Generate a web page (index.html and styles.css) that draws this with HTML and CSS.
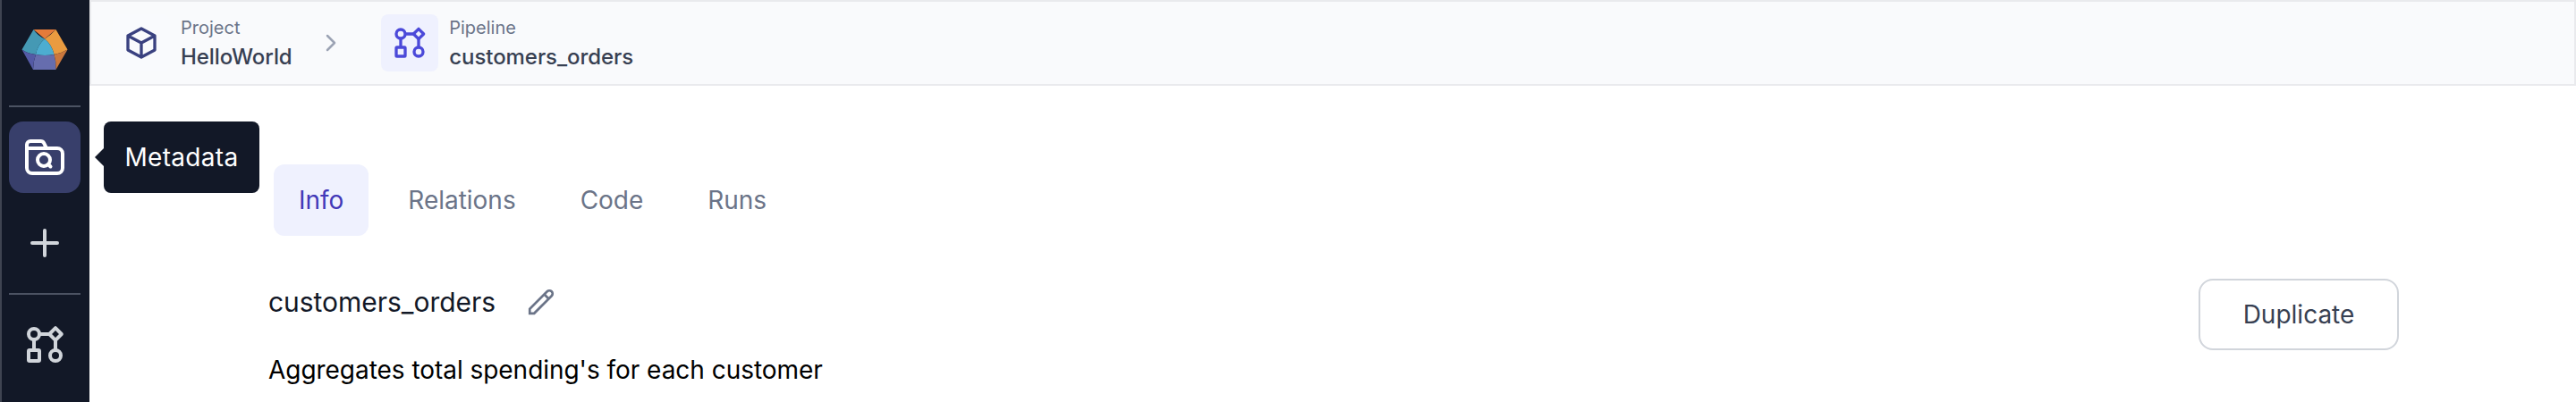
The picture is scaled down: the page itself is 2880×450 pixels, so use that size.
FILE: index.html
```html
<!DOCTYPE html>
<html lang="en">
<head>
<meta charset="utf-8">
<title>customers_orders</title>
<link rel="stylesheet" href="styles.css">
</head>
<body>
<svg width="0" height="0" class="sprite" aria-hidden="true">
  <symbol id="pipeline" viewBox="0 0 24 24">
    <g fill="none" stroke="currentColor" stroke-width="2" stroke-linejoin="round">
      <circle cx="6" cy="6" r="3"/>
      <path d="M18 2.6 21.4 6 18 9.4 14.6 6z"/>
      <rect x="3" y="15" width="6" height="6" rx=".5"/>
      <circle cx="18" cy="18" r="3"/>
      <path d="M9 6h5.6M6 9v6M18 9.4V15"/>
    </g>
  </symbol>
</svg>
<div class="app">
  <nav class="sidebar">
    <svg class="logo" viewBox="0 0 52 46">
      <path fill="#e57b3a" d="M13.5 0h25L26 10.500z"/>
      <path fill="#e99b40" d="M38.500 0 51.500 22.500Q44 27 36.500 28 34 17 26 10.500 33 6 38.500 0z"/>
      <path fill="#4599b4" d="M13.500 0Q18 7 26 10.500 18 17 16 28 7 27 .5 22.500z"/>
      <path fill="#4dadd0" d="M26 10.500Q34 17 36.500 28 26 30 16 28 18 17 26 10.500z"/>
      <path fill="#666dae" d="M16 28Q26 30 36.500 28 39 36 38.500 45H13Q13 36 16 28z"/>
      <path fill="#545aa5" d="M.5 22.500Q7 27 16 28 13 36 13 45z"/>
      <path fill="#ca773d" d="M51.500 22.500Q44 27 36.500 28 39 36 38.500 45z"/>
    </svg>
    <hr class="rule">
    <a class="nav-item active">
      <svg width="48" height="48" viewBox="0 0 48 48" fill="none" stroke="#fff" stroke-width="4" stroke-linecap="round" stroke-linejoin="round">
        <path d="M4 14V10a4 4 0 0 1 4-4h11.500a4 4 0 0 1 3.600 2.200L26 14M4 14h34a6 6 0 0 1 6 6v16a6 6 0 0 1-6 6H10a6 6 0 0 1-6-6z"/>
        <circle cx="23" cy="27" r="7"/><path d="M28 32l2.500 2.500"/>
      </svg>
      <span class="tooltip">Metadata</span>
    </a>
    <a class="nav-item add">
      <svg width="48" height="48" viewBox="0 0 48 48" fill="none" stroke="currentColor" stroke-width="4" stroke-linecap="round"><path d="M24 10v28M10 24h28"/></svg>
    </a>
    <hr class="rule">
    <a class="nav-item pipes"><svg width="48" height="48"><use href="#pipeline"/></svg></a>
  </nav>
  <div class="page">
    <header class="breadcrumbs">
      <a class="crumb">
        <span class="crumb-icon project">
          <svg width="40" height="40" viewBox="0 0 24 24" fill="none" stroke="currentColor" stroke-width="2" stroke-linecap="round" stroke-linejoin="round"><path d="M12 2.400 21 7.200V16.800L12 21.600 3 16.800V7.200zM3 7.200l9 4.800 9-4.800M12 12v9.600"/></svg>
        </span>
        <span class="crumb-text"><span class="kind">Project</span><span class="name">HelloWorld</span></span>
      </a>
      <svg class="chevron" width="12" height="20" viewBox="0 0 12 20" fill="none" stroke="#9ca3b4" stroke-width="2.500" stroke-linecap="round" stroke-linejoin="round"><path d="M2 2l8 8-8 8"/></svg>
      <a class="crumb">
        <span class="crumb-icon pipeline"><svg width="40" height="40"><use href="#pipeline"/></svg></span>
        <span class="crumb-text"><span class="kind">Pipeline</span><span class="name">customers_orders</span></span>
      </a>
    </header>
    <main class="content">
      <div class="tabs">
        <a class="tab selected">Info</a><a class="tab">Relations</a><a class="tab">Code</a><a class="tab">Runs</a>
      </div>
      <section class="details">
        <div class="summary">
          <div class="title-row">
            <h1 class="title">customers_orders</h1>
            <svg class="edit" width="34" height="34" viewBox="0 0 24 24" fill="none" stroke="#6b7488" stroke-width="1.900"><path d="M14.500 6l3.500 3.500M16.732 3.732a2.500 2.500 0 0 1 3.536 3.536L6.500 21.036H3v-3.572z"/></svg>
          </div>
          <p class="description">Aggregates total spending's for each customer</p>
        </div>
        <button class="duplicate">Duplicate</button>
      </section>
    </main>
  </div>
</div>
</body>
</html>
```
FILE: styles.css
```css
* { box-sizing: border-box; }
body { margin: 0; background: #fff; font-family: Inter, "Liberation Sans", sans-serif; font-size: 28px; line-height: 40px; }
.sprite { display: none; }
.app { display: flex; height: 450px; overflow: hidden; }
.sidebar { flex: none; width: 100px; border-left: 2px solid #3f4451; background: #121827; padding: 33px 10px 0 8px; display: flex; flex-direction: column; align-items: center; color: #d1d5db; }
.logo { width: 52px; height: 46px; }
.rule { width: 80px; height: 2px; border: 0; background: #4b5262; margin: 39px 0 16px; flex: none; }
.nav-item { position: relative; flex: none; width: 80px; height: 80px; border-radius: 16px; display: flex; align-items: center; justify-content: center; }
.active { background: #383f6b; }
.add { margin-top: 16px; }
.add + .rule { margin: 16px 0; }
.tooltip { position: absolute; left: 106px; top: 0; width: 174px; height: 80px; border-radius: 8px; background: #121827; color: #fff; line-height: 80px; text-align: center; letter-spacing: .3px; z-index: 1; }
.tooltip::before { content: ""; position: absolute; left: -10px; top: 30px; border: 10px solid transparent; border-left: 0; border-right-color: #121827; }
.page { flex: 1; min-width: 0; }
.breadcrumbs { height: 96px; border: 2px solid #e9eaed; background: #f9fafc; display: flex; align-items: center; padding-left: 24px; }
.crumb { display: flex; align-items: center; gap: 12px; }
.crumb-icon { width: 64px; height: 64px; border-radius: 8px; display: flex; align-items: center; justify-content: center; }
.project { background: #f9fafd; color: #3a4180; }
.pipeline { background: #eff1fe; color: #4b49d9; }
.crumb-text { display: flex; flex-direction: column; }
.kind { font-size: 20px; line-height: 32px; color: #6b7488; }
.name { font-size: 24px; line-height: 34px; font-weight: 500; color: #374052; letter-spacing: -.06px; }
.chevron { margin: 0 50px 0 37.6px; }
.content { padding: 88px 198px 0 200px; }
.tabs { display: flex; gap: 16px; padding-left: 6px; }
.tab { height: 80px; padding: 0 28px; line-height: 80px; border-radius: 12px; color: #6b7488; letter-spacing: -.02px; }
.selected { background: #eff1fe; color: #4239b8; }
.details { display: flex; justify-content: space-between; margin-top: 48px; }
.title-row { display: flex; align-items: center; height: 52px; gap: 34px; }
.title { margin: 0; font-size: 30px; font-weight: 400; color: #121827; letter-spacing: -.03px; }
.description { margin: 30px 0 0; line-height: 40px; color: #000; letter-spacing: -.04px; }
.duplicate { width: 224px; height: 80px; border: 2px solid #d1d5db; border-radius: 16px; background: #fff; font: inherit; color: #374052; padding: 0; }
```
